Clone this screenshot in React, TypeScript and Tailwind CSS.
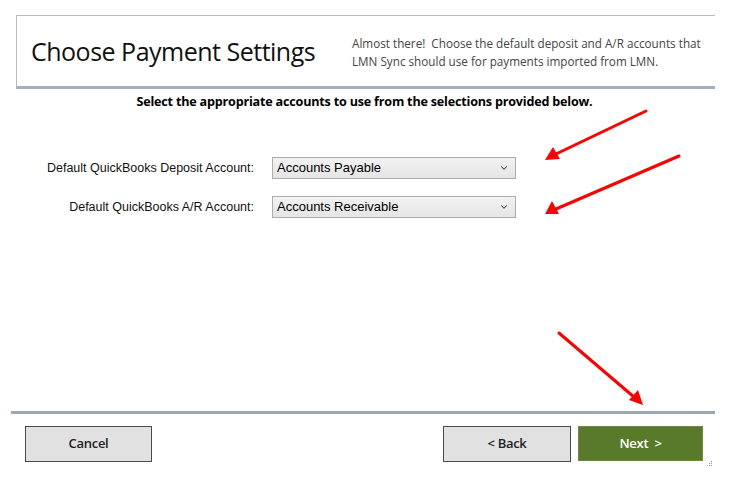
import { ChevronDown } from 'lucide-react';

const ACCOUNTS = [
  { label: 'Default QuickBooks Deposit Account:', value: 'Accounts Payable' },
  { label: 'Default QuickBooks A/R Account:', value: 'Accounts Receivable' },
];

function FakeSelect({ value }: { value: string }) {
  return (
    <div className="w-[244px] h-[22px] flex items-center justify-between pl-[4px] pr-[6px] border border-[#adadad] bg-gradient-to-b from-[#f2f2f2] to-[#e5e5e5] text-[13px] text-black font-['Liberation_Sans',sans-serif]">
      <span>{value}</span>
      <ChevronDown className="w-[10px] h-[10px] text-[#444]" strokeWidth={2.5} />
    </div>
  );
}

export default function App() {
  return (
    <div className="relative w-[729px] h-[497px] bg-white overflow-hidden font-['Open_Sans',sans-serif] text-black">
      {/* Header */}
      <div className="pt-[15px] pl-[16px]">
        <div className="w-[699px] h-[74px] flex items-center border-t border-l border-[#b9b9b9] border-b-[3px] border-b-[#a5afba]">
          <h1 className="pl-[14px] text-[25px] leading-none tracking-[-0.5px] text-[#111]">Choose Payment Settings</h1>
          <p className="ml-auto mr-[7px] w-[356px] text-[11.7px] leading-[18px] text-[#444] pt-[2px]">
            Almost there!&nbsp; Choose the default deposit and A/R accounts that LMN Sync should use for payments imported from LMN.
          </p>
        </div>
      </div>

      <p className="mt-[4px] text-center text-[12.6px] font-bold tracking-[-0.2px]">
        Select the appropriate accounts to use from the selections provided below.
      </p>

      {/* Account selections */}
      <div className="mt-[45px] flex flex-col gap-[17px]">
        {ACCOUNTS.map((a) => (
          <div key={a.label} className="flex items-center">
            <span className="w-[254px] text-right text-[12.5px] text-[#111] font-['Liberation_Sans',sans-serif]">
              {a.label}
            </span>
            <div className="ml-[18px]">
              <FakeSelect value={a.value} />
            </div>
          </div>
        ))}
      </div>

      {/* Footer */}
      <div className="absolute left-0 right-0 top-[411px]">
        <div className="ml-[11px] w-[704px] h-[3px] bg-[#9ba7b3]" />
        <div className="mt-[12px] flex items-start px-[25px]">
          <button className="w-[127px] h-[36px] border border-[#4a4a4a] bg-[#e1e1e1] text-[13px] font-semibold tracking-[-0.3px] text-[#222]">
            Cancel
          </button>
          <button className="ml-auto w-[128px] h-[36px] border border-[#4a4a4a] bg-[#e1e1e1] text-[13px] font-semibold tracking-[-0.3px] text-[#222]">
            &lt; Back
          </button>
          <button className="ml-[7px] mr-[1px] w-[125px] h-[35px] border border-[#6d8a40] bg-[#5a7a2b] text-[13px] font-semibold tracking-[-0.3px] text-white">
            Next&nbsp; &gt;
          </button>
        </div>
      </div>

      {/* resize grip */}
      <div className="absolute left-[707px] top-[461px] grid grid-cols-3 gap-[1px]">
        <span />
        <span />
        <span className="w-[1px] h-[1px] bg-[#999]" />
        <span />
        <span className="w-[1px] h-[1px] bg-[#999]" />
        <span className="w-[1px] h-[1px] bg-[#999]" />
        <span className="w-[1px] h-[1px] bg-[#999]" />
        <span className="w-[1px] h-[1px] bg-[#999]" />
        <span className="w-[1px] h-[1px] bg-[#999]" />
      </div>

      {/* Annotation arrows */}
      <svg className="absolute inset-0 pointer-events-none" width="729" height="497" viewBox="0 0 729 497">
        <g stroke="#ff0000" strokeWidth="3" strokeLinecap="round" fill="#ff0000">
          <line x1="646" y1="111" x2="556" y2="154" />
          <line x1="679" y1="156" x2="556" y2="209" />
          <line x1="559" y1="333" x2="634" y2="397" />
        </g>
        <g fill="#ff0000">
          <polygon points="545,160 553,147 560,159" />
          <polygon points="545,214 552,201 559,214" />
          <polygon points="643,405 629,400 638,390" />
        </g>
      </svg>
    </div>
  );
}
